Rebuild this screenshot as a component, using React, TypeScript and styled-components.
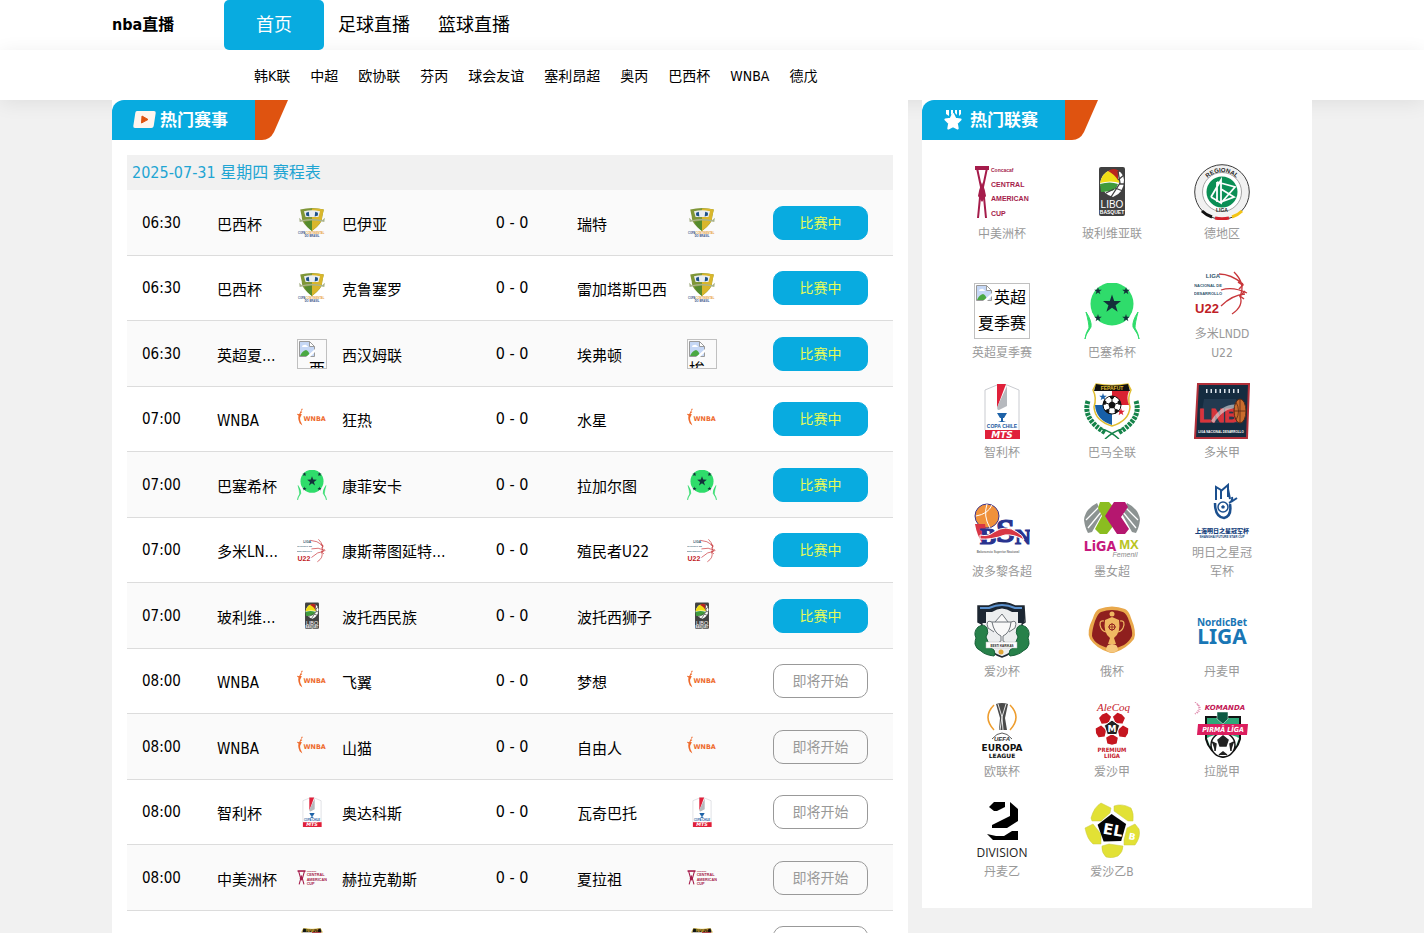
import React from "react";
import styled, { createGlobalStyle, css } from "styled-components";

const BLUE = "#08abe0";
const ORANGE = "#df5310";
const BASE_FONT = `"DejaVu Sans Condensed", "Noto Sans CJK SC", sans-serif`;
const PLAIN = `"Liberation Sans", sans-serif`;
const WIDE = `"DejaVu Sans", sans-serif`;

const GlobalStyle = createGlobalStyle`
  * { box-sizing: border-box; }
  body {
    margin: 0;
    background: #f1f1f1;
    color: #000;
    font: 16px/26px ${BASE_FONT};
  }
  a { color: inherit; text-decoration: none; }
  h1, h2, ul, p { margin: 0; padding: 0; }
  ul { list-style: none; }
`;

/* ---------- page frame ---------- */

const Container = styled.div`
  max-width: 1200px;
  margin: 0 auto;
`;

const TopBar = styled.header`
  background: #fff;
`;

const TopInner = styled(Container)`
  display: flex;
  height: 50px;
`;

const SiteName = styled.h1`
  width: 112px;
  font-size: 16px;
  line-height: 50px;
`;

const MainNav = styled.nav`
  display: flex;
`;

const MainLink = styled.a<{ $active?: boolean }>`
  width: 100px;
  border-radius: 5px;
  font-size: 18px;
  line-height: 50px;
  text-align: center;
  ${(p) => p.$active && css`
    background: ${BLUE};
    color: #fff;
  `}
`;

const SubBar = styled.nav`
  background: #fff;
  box-shadow: 0 3px 20px rgba(0, 0, 0, 0.08);
`;

const SubInner = styled(Container)`
  display: flex;
  gap: 20px;
  height: 50px;
  padding-left: 142px;
  font-size: 14px;
  line-height: 52px;
`;

const Columns = styled(Container).attrs({ as: "main" })`
  display: grid;
  grid-template-columns: minmax(0, 1fr) 390px;
  align-items: start;
  gap: 14px;
`;

const Panel = styled.section`
  background: #fff;
`;

const PanelHead = styled.div`
  display: flex;
  height: 40px;
`;

const PanelTitle = styled.h2`
  display: flex;
  align-items: center;
  gap: 4px;
  width: 143px;
  padding-left: 21px;
  border-top-left-radius: 12px;
  background: ${BLUE};
  color: #fff;
  font-size: 17px;
  line-height: 40px;
`;

/* ---------- schedule ---------- */

const ScheduleBody = styled.div`
  padding: 15px;
`;

const Schedule = styled.table`
  width: 100%;
  table-layout: fixed;
  border-collapse: separate;
  border-spacing: 0;
`;

const DateCaption = styled.caption`
  padding-left: 5px;
  background: #f1f1f1;
  color: #1fa5d3;
  line-height: 35px;
  text-align: left;
`;

const MatchRow = styled.tr`
  height: 65px;
  &:nth-child(odd) {
    height: 66px;
    background: #fafafa;
  }
`;

const Cell = styled.td`
  padding: 0;
  border-bottom: 1px solid #dcdcdc;
`;

const TimeCell = styled(Cell)`
  padding-left: 15px;
  font-size: 15px;
`;

const ScoreCell = styled(Cell)`
  text-align: center;
`;

const StatusCell = styled(Cell)`
  padding-right: 25px;
`;

const Side = styled.div`
  display: flex;
  align-items: center;
  gap: 15px;
`;

const Name = styled.div<{ $width: number }>`
  width: ${(p) => p.$width}px;
  padding-top: 4px;
  overflow: hidden;
  font-size: 15px;
  text-overflow: ellipsis;
  white-space: nowrap;
`;

const StatusLink = styled.a<{ $live: boolean }>`
  display: block;
  width: 95px;
  margin-left: auto;
  border: 1px solid ${(p) => (p.$live ? BLUE : "#999")};
  border-radius: 10px;
  background: ${(p) => (p.$live ? BLUE : "transparent")};
  color: ${(p) => (p.$live ? "#e6fb57" : "#999")};
  font-size: 14px;
  line-height: 32px;
  text-align: center;
`;

/* ---------- leagues ---------- */

const LeagueGrid = styled.ul`
  display: grid;
  grid-template-columns: repeat(3, 1fr);
  align-items: end;
  row-gap: 20px;
  padding: 24px 35px 26px 25px;
`;

const LeagueLink = styled.a`
  display: flex;
  flex-direction: column;
  align-items: center;
  gap: 5px;
`;

const LeagueName = styled.span`
  width: 68px;
  color: #999;
  font-size: 12px;
  line-height: 19px;
  text-align: center;
`;

/* ---------- logos ---------- */

const LogoSvg = styled.svg<{ $size: number }>`
  display: block;
  flex: none;
  width: ${(p) => p.$size}px;
  height: ${(p) => p.$size}px;
`;

const BrokenBox = styled.div<{ $size: number; $align: string }>`
  flex: none;
  width: ${(p) => p.$size}px;
  height: ${(p) => p.$size}px;
  padding: 1px;
  overflow: hidden;
  border: 1px solid #c0c0c0;
  text-align: ${(p) => p.$align};
`;

const BrokenIcon = styled.svg`
  float: left;
  width: 16px;
  height: 16px;
`;

function Broken({ size, alt, align }: { size: number; alt: string; align: string }) {
  return (
    <BrokenBox $size={size} $align={align}>
      <BrokenIcon viewBox="0 0 16 16">
        <path d="M.5.5h10l5 5v10H.5z" fill="#c5d7f5" stroke="#9a9a9a" />
        <path d="M10.500 .5v5h5z" fill="#fff" stroke="#9a9a9a" />
        <path d="M3 6q0-2 2-2 2-1 3 1 1 0 1 1z" fill="#fff" />
        <path d="M1 15q2-5 6-6 3 1 4 6z" fill="#4aa843" />
        <path d="M7 16l9-8v3l-5 5z" fill="#fff" />
      </BrokenIcon>
      {alt}
    </BrokenBox>
  );
}

function polygon(cx: number, cy: number, r: number, n: number, turn = 0, inner?: number) {
  const total = inner === undefined ? n : n * 2;
  return Array.from({ length: total }, (_, i) => {
    const rad = inner !== undefined && i % 2 ? inner : r;
    const a = (i / total) * Math.PI * 2 - Math.PI / 2 + turn;
    return `${(cx + rad * Math.cos(a)).toFixed(1)},${(cy + rad * Math.sin(a)).toFixed(1)}`;
  }).join(" ");
}

const star = (cx: number, cy: number, r: number) => polygon(cx, cy, r, 5, 0, r * 0.4);

type WordProps = {
  x: number;
  y: number;
  s: number;
  c: string;
  f?: string;
  w?: number;
  i?: boolean;
  children: string;
};

function Word({ x, y, s, c, f = PLAIN, w = 700, i, children }: WordProps) {
  return (
    <text x={x} y={y} fontSize={s} fill={c} fontFamily={f} fontWeight={w}
      fontStyle={i ? "italic" : "normal"} textAnchor="middle">
      {children}
    </text>
  );
}

const logos: Record<string, React.ReactNode> = {
  central: (
    <>
      <path d="M1 2h14v4H1z" fill="#a51c4b" />
      <path d="M3 4l4 19-3 31M13 4L9 23l3 31" fill="none" stroke="#a51c4b" strokeWidth="2" />
      <path d="M8 18l3 9 1 5-4 6-4-6 1-5z" fill="#a51c4b" />
      <g fontWeight="700" fill="#a51c4b" fontFamily={PLAIN}>
        <text x="17" y="8" fontSize="5">Concacaf</text>
        <text x="17" y="23" fontSize="7">CENTRAL</text>
        <text x="17" y="37" fontSize="7">AMERICAN</text>
        <text x="17" y="52" fontSize="7">CUP</text>
      </g>
    </>
  ),
  centralWide: (
    <>
      <path d="M1 15h15" stroke="#a51c4b" strokeWidth="3" />
      <path d="M3 15l4 14-3 11M14 15l-4 14 3 11" fill="none" stroke="#a51c4b" strokeWidth="2" />
      <path d="M8 22l3 7-3 4-3-4z" fill="#a51c4b" />
      <g fontWeight="700" fill="#a51c4b" fontFamily={PLAIN}>
        <text x="18" y="17" fontSize="4">Concacaf</text>
        <text x="18" y="25" fontSize="7">CENTRAL</text>
        <text x="18" y="33" fontSize="7">AMERICAN</text>
        <text x="18" y="41" fontSize="7">CUP</text>
      </g>
    </>
  ),
  libo: (
    <>
      <rect x="15" y="3" width="26" height="49" rx="2" fill="#414141" />
      <path d="M16 20q1-11 11-14 12-1 13 10 0 13-11 17-9-2-13-13z" fill="#fff" />
      <path d="M16 19q2-9 8-12 9 2 12 12-9-3-20 0z" fill="#f0dd16" />
      <path d="M24 7q6-4 11 0l-1 9q-4-6-10-9z" fill="#b9251e" />
      <path d="M16 20q10-3 18 0-2 7-8 7-6 1-9 1z" fill="#3f9b3c" />
      <path d="M34 7l2 12-9 14M31 24l8 3M34 16l6-5M35 20h5M22 29l8-4" fill="none" stroke="#414141" strokeWidth="1.300" />
      <Word x={28} y={44} s={10} c="#fff" w={400}>LIBO</Word>
      <Word x={28} y={50} s={5} c="#fff">BASQUET</Word>
    </>
  ),
  regional: (
    <>
      <circle cx="28" cy="28" r="27.300" fill="#f1f1f1" stroke="#3b3b3b" strokeWidth="1" />
      <circle cx="28" cy="28" r="19.500" fill="#fff" stroke="#a5a5a5" strokeWidth="1" />
      <circle cx="28" cy="28" r="15.500" fill="#0b8f55" />
      <path d="M17 33l10-17v23l-10-6M23 18l18 5-14 16M23 18v20M27 25l13 8-13 5" fill="none" stroke="#fff" strokeWidth="1.800" />
      <path id="regionalArc" d="M8 28a20 20 0 0 1 40 0" fill="none" />
      <text fontSize="6" fontWeight="700" fontFamily={PLAIN} fill="#222">
        <textPath href="#regionalArc" startOffset="50%" textAnchor="middle">REGIONAL</textPath>
      </text>
      <Word x={28} y={48} s={5} c="#222">LIGA</Word>
      <path d="M8 47q4 4 10 6" fill="none" stroke="#111" strokeWidth="3" />
      <path d="M21 54q7 1.500 14 0" fill="none" stroke="#d3202b" strokeWidth="3" />
      <path d="M38 53q6-2 10-6" fill="none" stroke="#f3c414" strokeWidth="3" />
    </>
  ),
  barcelona: (
    <>
      <circle cx="28" cy="21" r="21.500" fill="#2fdc6b" />
      <polygon points={star(28, 21, 9.500)} fill="#13303a" />
      {[[14, 8], [42, 8], [14, 35], [42, 35]].map(([x, y]) => (
        <polygon key={`${x}-${y}`} points={star(x, y, 4)} fill="#13303a" />
      ))}
      <path d="M2 29q6 9 5 15l-5 8-1 4q1-7 4-11 0-5-3-16zM54 29q-6 9-5 15l5 8 1 4q-1-7-4-11 0-5 3-16z"
        fill="#2fdc6b" stroke="#2fdc6b" strokeWidth="1" />
    </>
  ),
  u22: (
    <>
      <Word x={19} y={14} s={6} c="#31566c">LIGA</Word>
      <Word x={14} y={23} s={4} c="#31566c">NACIONAL DE</Word>
      <Word x={14} y={31} s={4} c="#31566c">DESARROLLO</Word>
      <Word x={13} y={49} s={13} c="#bf2026">U22</Word>
      <path d="M25 10q12 0 24 10M27 26q12-4 26 3M27 42q11-11 24-12M40 8q12 12 6 24 4 10-8 18" fill="none" stroke="#c8373b" strokeWidth="1.300" />
      <path d="M44 18l5 3-4 4M51 27l-5 5 4 3" fill="none" stroke="#c8373b" strokeWidth="1.500" />
    </>
  ),
  chile: (
    <>
      <path d="M11 47V7l12-5h10l12 5v40" fill="#fff" stroke="#c9cbd0" strokeWidth="1" />
      <path d="M23 1h9l-9 24z" fill="#e0203a" />
      <path d="M33 3v20l-8 4q-3 0-1-5z" fill="#b6b9be" />
      <path d="M23 30h10l-3 5h-1v3l3 1H24l3-1v-3h-1z" fill="#1d62a8" />
      <Word x={28} y={45} s={5} c="#1c5aa0">COPA CHILE</Word>
      <rect x="11" y="47" width="35" height="9" fill="#e0203a" />
      <Word x={28} y={55} s={9} c="#fff" f={WIDE} i>MTS</Word>
    </>
  ),
  panama: (
    <>
      <path d="M4 18q-6 18 18 32M52 18q6 18-18 32" fill="none" stroke="#15834a" strokeWidth="5" strokeDasharray="3 1" />
      <path d="M18 46q8 2 17 10M38 46q-8 2-17 10" fill="none" stroke="#15834a" strokeWidth="1.500" />
      <path d="M12 1q16 3 32 0l3 6q-4 8-1 17-1 14-18 19-17-5-18-19 3-9-1-17z" fill="#fff" stroke="#e0bd2f" strokeWidth="1.500" />
      <path d="M28 8h17q-3 7 0 14H28z" fill="#d92131" />
      <path d="M11 22h17v20Q12 37 11 22z" fill="#175fa8" />
      <path d="M12 1q16 3 32 0l2 7H10z" fill="#111" />
      <Word x={28} y={7} s={5} c="#e0bd2f">FEPAFUT</Word>
      <polygon points={star(19, 14, 4)} fill="#175fa8" />
      <polygon points={star(37, 29, 4)} fill="#d92131" />
      <circle cx="28" cy="22" r="9" fill="#fff" stroke="#111" strokeWidth="1" />
      <polygon points={polygon(28, 22, 4, 5)} fill="#111" />
      {[0, 1, 2, 3, 4].map((n) => (
        <path key={n} d="M28 18v-3M26 13.500h4l-1 2h-2z" fill="#111" stroke="#111" strokeWidth="1" transform={`rotate(${n * 72} 28 22)`} />
      ))}
    </>
  ),
  lnd: (
    <>
      <path d="M4 1h51l-2 54H1z" fill="#152c40" stroke="#b2303a" strokeWidth="2" />
      <path d="M12 8h34" stroke="#dce3ea" strokeWidth="4" strokeDasharray="1.500 3" />
      <path d="M10 16h32l4 24H6z" fill="#223a50" />
      <text x="5" y="39" fontSize="19" fontWeight="700" fontFamily={PLAIN} fill="#d8343a" stroke="#d8343a" strokeWidth="1">LNB</text>
      <path d="M17 38q12-19 28-16v3Q30 24 20 40z" fill="#e3e3e3" opacity="0.600" />
      <ellipse cx="46" cy="28" rx="6" ry="12" fill="#c96c2d" stroke="#5b2a14" strokeWidth="1" />
      <path d="M40 28h12M46 16v24M42 19q5 9 0 18" fill="none" stroke="#5b2a14" strokeWidth="0.800" />
      <Word x={27} y={50} s={3} c="#fff">LIGA NACIONAL DESARROLLO</Word>
    </>
  ),
  bsn: (
    <>
      <circle cx="13" cy="14" r="12" fill="#f0913b" stroke="#3c3790" strokeWidth="1" />
      <path d="M2 14q12-2 16-11M13 2q-4 12 3 24" fill="none" stroke="#fff" strokeWidth="1" />
      <path d="M1 22q2 12 8 20l4-8-2-12z" fill="#d83645" />
      <text x="6" y="42" fontFamily={`"Liberation Serif", serif`} fontWeight="700" fill="#29338f" stroke="#29338f" strokeWidth="1.200">
        <tspan fontSize="24">B</tspan>
        <tspan fontSize="34" y="40">S</tspan>
        <tspan fontSize="22" y="42">N</tspan>
      </text>
      <path d="M6 33q8 2 14-3 12-8 23 0 6 3 7 8-10-6-19-5-14 5-25 4z" fill="#d83645" stroke="#fff" strokeWidth="1" />
      <Word x={24} y={51} s={3} c="#777">Baloncesto Superior Nacional</Word>
    </>
  ),
  ligamx: (
    <>
      <path d="M13 1Q1 7 0 18q1 8 4 13l4-1L18 12zM43 1q12 6 13 17-1 8-4 13l-4-1L38 12z" fill="#8c9392" />
      <path d="M2 18l13-13M4 26L18 9M54 18L41 5M52 26L38 9" stroke="#fff" strokeWidth="1.300" />
      <path d="M16 0h9l7 8-8 6 6 9-7 9h-7l-5-5 7-13-4-8z" fill="#8bbd20" />
      <path d="M30 0h11l3 5-7 10 8 12-4 5h-8L21 14z" fill="#b5176f" />
      <Word x={16} y={49} s={14} c="#c6197d" f={BASE_FONT}>LiGA</Word>
      <Word x={45} y={47} s={13} c="#b9c422">MX</Word>
      <Word x={41} y={55} s={7} c="#8a8a8a" w={400} i>Femenil</Word>
    </>
  ),
  shanghai: (
    <>
      <path d="M22 17V4l5 3v9M27 8l7-6v12M34 6l2 10M38 14q1 4-3 6M43 15l-6 4" fill="none" stroke="#1b4f8e" strokeWidth="2" />
      <path d="M21 20q0 14 9 15 8-2 6-14" fill="none" stroke="#1b4f8e" strokeWidth="2.500" />
      <circle cx="29" cy="24" r="5" fill="#fff" stroke="#1b4f8e" strokeWidth="1.500" />
      <polygon points={polygon(29, 24, 2, 5)} fill="#1b4f8e" />
      <Word x={28} y={50} s={6} c="#143f7c" f={BASE_FONT} w={900}>上海明日之星冠军杯</Word>
      <Word x={28} y={55} s={3} c="#143f7c">SHANGHAI FUTURE STAR CUP</Word>
    </>
  ),
  estcup: (
    <>
      <path d="M4 4h11Q28-3 41 4h9l1 16-3 2q5 24-20 33Q3 46 8 22l-4-2z" fill="#eceeef" stroke="#222a33" strokeWidth="1.500" />
      <path d="M4 4h11Q28-3 41 4h9v17h-6V10H38Q28 3 18 10h-6v11H4z" fill="#1c2632" />
      <path d="M6 6h9Q28 0 41 6h7" fill="none" stroke="#5c92cf" strokeWidth="2" />
      <path d="M18 20h19q-1 11-8 14v5l5 3H22l5-3v-5q-7-3-9-14zM18 20q-7-3-4 6l6 4M37 20q7-3 4 6l-6 4M21 20l7-8 6 8" fill="#f8f8f8" stroke="#6e747a" strokeWidth="1" />
      <path d="M4 25q6-4 9 1 2 5-1 9 3 5 2 9l6 4q2 5 0 6-9-1-13-5-5-2-6-7 0-4 1-6-3-6 2-11zM52 25q-6-4-9 1-2 5 1 9-3 5-2 9l-6 4q-2 5 0 6 9-1 13-5 5-2 6-7 0-4-1-6 3-6-2-11z" fill="#27814a" stroke="#19613a" strokeWidth="1" />
      <path d="M12 40h31v6H12z" fill="#fff" stroke="#bbb" strokeWidth="0.500" />
      <Word x={28} y={45} s={3} c="#222">EESTI KARIKAS</Word>
      <circle cx="27" cy="50" r="2.500" fill="#e2a637" />
    </>
  ),
  ruscup: (
    <>
      <path d="M15 7q13-5 26 0 4 2 6 9 6 14 3 21-7 9-18 13-4 2-8 0Q12 46 6 37q-4-7 3-21 2-7 6-9z" fill="#e9a84b" />
      <path d="M17 10q11-4 22 0 4 2 6 9 4 10 3 15-3 6-8 9l-12 5-12-5q-7-4-8-9 0-6 3-15 3-8 6-9z" fill="#8f1f1e" />
      <circle cx="28" cy="12" r="2.500" fill="#f0b862" />
      <path d="M21 18l7-3 7 3q2 13-5 18l2 6h-8l2-6q-7-5-5-18z" fill="#f0b862" />
      <path d="M20 19q-6-1-3 7 2 4 6 4M36 19q6-1 3 7-2 4-6 4" fill="none" stroke="#f0b862" strokeWidth="1.200" />
      <path d="M22 48q0-6 6-6t6 6q-6 5-12 0z" fill="#f5c77e" />
      <circle cx="28" cy="25" r="3" fill="none" stroke="#8f1f1e" strokeWidth="1" />
      <path d="M28 21v8M24 25h8" stroke="#8f1f1e" strokeWidth="0.800" />
    </>
  ),
  nordic: (
    <>
      <Word x={28} y={24} s={10} c="#1976b5" f={`"Noto Sans", sans-serif`}>NordicBet</Word>
      <Word x={28} y={42} s={21} c="#1976b5" f={`"Noto Sans", sans-serif`}>LIGA</Word>
    </>
  ),
  europa: (
    <>
      <path d="M20 3q-12 12 0 25M36 3q12 12 0 25" fill="none" stroke="#ee9d2e" strokeWidth="1.500" />
      <path d="M22 2q6-2 12 0l-3 14 2 12h-8l1-12z" fill="#4a4a4a" />
      <path d="M24 2l4 13 1 13M32 2l-4 13-2 13" fill="none" stroke="#e5e5e5" strokeWidth="1" />
      <path d="M18 37q10-12 20 0" fill="none" stroke="#333" strokeWidth="0.800" />
      <Word x={28} y={39} s={6} c="#333" i>UEFA</Word>
      <Word x={28} y={49} s={9} c="#111" f={WIDE}>EUROPA</Word>
      <Word x={28} y={56} s={6} c="#111" f={WIDE}>LEAGUE</Word>
    </>
  ),
  premium: (
    <>
      <text x="13" y="9" fontSize="11" fontStyle="italic" fontFamily={`"Liberation Serif", serif`} fill="#c5202a">AleCoq</text>
      {[0, 1, 2, 3, 4].map((n) => (
        <path key={n} d="M23 36l5-3 5 3-1 5-4 1-4-1z" fill="#c51620" stroke="#c51620" strokeWidth="1.500" transform={`rotate(${n * 72} 28 26)`} />
      ))}
      <polygon points={polygon(28, 26, 8, 5)} fill="#222" stroke="#fff" strokeWidth="1" />
      <Word x={28} y={30} s={9} c="#fff" f={WIDE}>M</Word>
      <Word x={28} y={50} s={6} c="#c5202a" f={BASE_FONT}>PREMIUM</Word>
      <Word x={28} y={56} s={6} c="#c5202a" f={BASE_FONT}>LIIGA</Word>
    </>
  ),
  pirma: (
    <>
      <path d="M1 0q8 6 0 12M3 2q6 4 0 9" fill="none" stroke="#e08bad" strokeWidth="1.500" strokeDasharray="1 1" />
      <Word x={31} y={8} s={7} c="#c31855" f={WIDE} i>KOMANDA</Word>
      <path d="M12 15h34v22q-3 13-17 18-14-5-17-18z" fill="#2ea878" stroke="#111" strokeWidth="2" />
      <path d="M13 36q16-8 32 0l-3 8H16z" fill="#fff" />
      <circle cx="29" cy="43" r="12" fill="#fff" stroke="#111" strokeWidth="1.500" />
      <path d="M24 38l5-4 5 4-2 6h-6zM18 40l4 2-1 7M40 40l-4 2 1 7M25 53l4-3 4 3" fill="#222" stroke="#222" strokeWidth="1.500" />
      <path d="M23 10h11v7l-5 5-6-5z" fill="#0d5a43" stroke="#fff" strokeWidth="0.500" />
      <path d="M4 22h50l-1 11H3z" fill="#dc1e5f" />
      <Word x={29} y={30} s={7} c="#fff" f={BASE_FONT} i>PIRMĀ LĪGA</Word>
    </>
  ),
  division: (
    <>
      <path d="M15 5l5-5h11v5l-8 4h-3z" fill="#000" />
      <path d="M36 0l8 7v12L33 26H18v-3l18-9z" fill="#000" />
      <path d="M13 32l9 2h8l8-5h6v9H19z" fill="#000" />
      <Word x={28} y={55} s={12} c="#222" f={`"Open Sans", sans-serif`} w={400}>DIVISION</Word>
    </>
  ),
  elb: (
    <>
      <g fill="#e2e135" stroke="#c8c840" strokeWidth="0.500">
        <path d="M7 16q3-11 10-15l10 5-1 5-9 8-9 0z" />
        <path d="M30 4q8-3 17 2 3 5 2 13h-5L30 9z" />
        <path d="M1 26l8-4 8 10v10H9q-6-5-8-16z" />
        <path d="M43 26l8-4 4 5q2 8-4 16H40l0-5z" />
        <path d="M18 44l7-2 14 2q0 6-5 10-6 3-12 1-5-5-4-11z" />
      </g>
      <polygon points={polygon(28, 27, 15, 5, -0.030)} fill="#050505" />
      <g transform="rotate(10 28 28)">
        <Word x={29} y={33} s={15} c="#fff" f={WIDE}>EL</Word>
        <Word x={49} y={34} s={9} c="#fff" f={WIDE}>B</Word>
      </g>
    </>
  ),
  brazil: (
    <>
      <path d="M6 3q22-6 44 0l-3 14q1 11-19 26Q8 28 9 17z" fill="#7f9638" />
      <path d="M28 1q11-1 22 2l-3 14q1 11-19 26z" fill="#d9b62c" />
      <path d="M13 6q15-4 30 0l-3 11H16z" fill="#e9edf1" />
      <path d="M17 9l5-2 1 9-6-2zM39 9l-5-2-1 9 6-2z" fill="#1b4f86" />
      <path d="M4 18l5 5q19-5 38 0l5-5-1 8q-23-5-46 0z" fill="#a9b38c" />
      <path d="M14 26q13-3 14-2v19Q18 36 14 26z" fill="#548b2e" />
      <text x="2" y="49" fontSize="5" fontWeight="700" fontFamily={PLAIN} fill="#38538b">
        COPA<tspan fill="#e9a443">CONTINENTAL</tspan>
      </text>
      <Word x={28} y={55} s={5} c="#38538b">DO BRASIL</Word>
    </>
  ),
  wnba: (
    <>
      <path d="M7 13l3 2-4 3 3 1-3 6q-1 5 2 10l2 5-5-4q-4-8-2-14l-4-4 5 1z" fill="#ee6a2c" />
      <path d="M8 12l2-3" stroke="#ee6a2c" strokeWidth="2" />
      <Word x={33} y={32} s={12} c="#ee6a2c" f={WIDE}>WNBA</Word>
    </>
  ),
};

function Logo({ id, size, alt = "", align = "center" }: { id: string; size: number; alt?: string; align?: string }) {
  if (id === "missing") return <Broken size={size} alt={alt} align={align} />;
  return <LogoSvg $size={size} viewBox="0 0 56 56" aria-hidden="true">{logos[id]}</LogoSvg>;
}

/* ---------- heading pieces ---------- */

const VideoIcon = () => (
  <svg width="23" height="18" viewBox="0 0 23 18" aria-hidden="true">
    <path d="M4 0h17q2 0 1.700 2l-2 13q-.3 2-2.300 2H2q-2 0-1.700-2l2-13Q2.500 0 4 0z" fill="#fff5ee" />
    <path d="M9 5l6 3.500L8.500 12z" fill={ORANGE} stroke={ORANGE} />
  </svg>
);

const MedalIcon = () => (
  <svg width="23" height="20" viewBox="0 0 23 20" aria-hidden="true">
    <path d="M3 0h3v6L3 4zM8 0h2v3L8 5zM12 0h2v5l-2-2zM16 0h2v4l-2 2z" fill="#fff" />
    <polygon points={polygon(10, 12, 8, 5, 0, 4)} fill="#fff" stroke="#fff" strokeWidth="2" strokeLinejoin="round" />
  </svg>
);

function Heading({ icon, children }: { icon: React.ReactNode; children: string }) {
  return (
    <PanelHead>
      <PanelTitle>{icon}{children}</PanelTitle>
      <svg width="33" height="40" viewBox="0 0 33 40" aria-hidden="true">
        <path d="M0 0h33L19 32q-4 8-12 8H0z" fill={ORANGE} />
      </svg>
    </PanelHead>
  );
}

/* ---------- data ---------- */

const mainLinks = ["首页", "足球直播", "篮球直播"];
const subLinks = ["韩K联", "中超", "欧协联", "芬丙", "球会友谊", "塞利昂超", "奥丙", "巴西杯", "WNBA", "德戊"];

type Match = [time: string, league: string, logo: string, home: string, away: string, live: boolean];

const matches: Match[] = [
  ["06:30", "巴西杯", "brazil", "巴伊亚", "瑞特", true],
  ["06:30", "巴西杯", "brazil", "克鲁塞罗", "雷加塔斯巴西", true],
  ["06:30", "英超夏季赛", "missing", "西汉姆联", "埃弗顿", true],
  ["07:00", "WNBA", "wnba", "狂热", "水星", true],
  ["07:00", "巴塞希杯", "barcelona", "康菲安卡", "拉加尔图", true],
  ["07:00", "多米LNDD U22", "u22", "康斯蒂图延特U22", "殖民者U22", true],
  ["07:00", "玻利维亚联", "libo", "波托西民族", "波托西狮子", true],
  ["08:00", "WNBA", "wnba", "飞翼", "梦想", false],
  ["08:00", "WNBA", "wnba", "山猫", "自由人", false],
  ["08:00", "智利杯", "chile", "奥达科斯", "瓦奇巴托", false],
  ["08:00", "中美洲杯", "centralWide", "赫拉克勒斯", "夏拉祖", false],
  ["08:00", "巴马全联", "panama", "乌玛卡", "圣米格利托", false],
];

const leagues: [string, string][] = [
  ["central", "中美洲杯"], ["libo", "玻利维亚联"], ["regional", "德地区"],
  ["missing", "英超夏季赛"], ["barcelona", "巴塞希杯"], ["u22", "多米LNDD U22"],
  ["chile", "智利杯"], ["panama", "巴马全联"], ["lnd", "多米甲"],
  ["bsn", "波多黎各超"], ["ligamx", "墨女超"], ["shanghai", "明日之星冠军杯"],
  ["estcup", "爱沙杯"], ["ruscup", "俄杯"], ["nordic", "丹麦甲"],
  ["europa", "欧联杯"], ["premium", "爱沙甲"], ["pirma", "拉脱甲"],
  ["division", "丹麦乙"], ["elb", "爱沙乙B"],
];

const columnWidths = [90, 80, 150, 130, 140];

export default function App() {
  return (
    <>
      <GlobalStyle />
      <TopBar>
        <TopInner>
          <SiteName>nba直播</SiteName>
          <MainNav>
            {mainLinks.map((label, i) => (
              <MainLink key={label} href="#" $active={i === 0}>{label}</MainLink>
            ))}
          </MainNav>
        </TopInner>
      </TopBar>
      <SubBar>
        <SubInner>
          {subLinks.map((label) => <a key={label} href="#">{label}</a>)}
        </SubInner>
      </SubBar>
      <Columns>
        <Panel>
          <Heading icon={<VideoIcon />}>热门赛事</Heading>
          <ScheduleBody>
            <Schedule>
              <DateCaption>2025-07-31 星期四 赛程表</DateCaption>
              <colgroup>
                {columnWidths.map((width, i) => <col key={i} width={width} />)}
                <col />
              </colgroup>
              <tbody>
                {matches.map(([time, league, logo, home, away, live]) => (
                  <MatchRow key={home}>
                    <TimeCell>{time}</TimeCell>
                    <Cell><Name $width={62}>{league}</Name></Cell>
                    <Cell>
                      <Side>
                        <Logo id={logo} size={30} alt={home} align="right" />
                        <Name $width={105}>{home}</Name>
                      </Side>
                    </Cell>
                    <ScoreCell>0 - 0</ScoreCell>
                    <Cell>
                      <Side>
                        <Name $width={95}>{away}</Name>
                        <Logo id={logo} size={30} alt={away} align="left" />
                      </Side>
                    </Cell>
                    <StatusCell>
                      <StatusLink href="#" $live={live}>{live ? "比赛中" : "即将开始"}</StatusLink>
                    </StatusCell>
                  </MatchRow>
                ))}
              </tbody>
            </Schedule>
          </ScheduleBody>
        </Panel>
        <Panel>
          <Heading icon={<MedalIcon />}>热门联赛</Heading>
          <LeagueGrid>
            {leagues.map(([logo, label]) => (
              <li key={label}>
                <LeagueLink href="#">
                  <Logo id={logo} size={56} alt={label} />
                  <LeagueName>{label}</LeagueName>
                </LeagueLink>
              </li>
            ))}
          </LeagueGrid>
        </Panel>
      </Columns>
    </>
  );
}
